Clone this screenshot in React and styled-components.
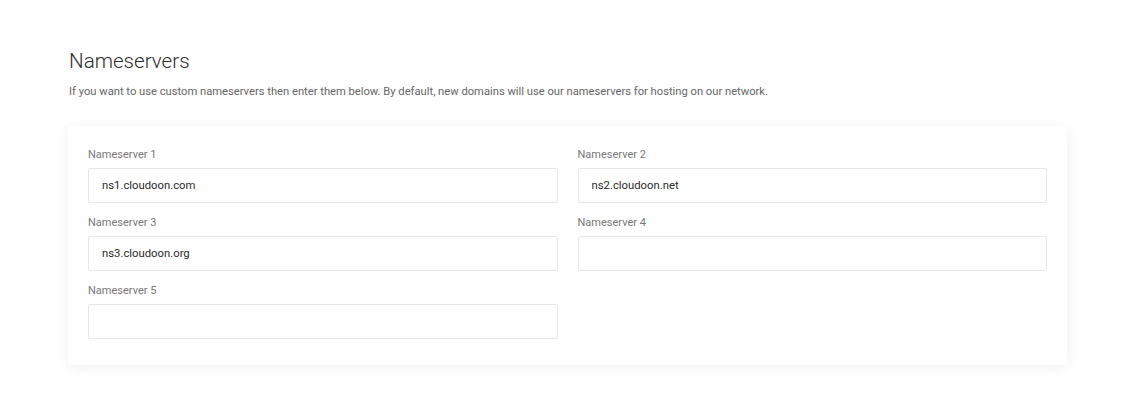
import React from "react";
import styled, { createGlobalStyle } from "styled-components";

const Global = createGlobalStyle`
  html, body { margin: 0; padding: 0; background: #ffffff; }
  body { font-family: Roboto, "Liberation Sans", Arial, sans-serif; }
  * { box-sizing: border-box; }
`;

const Page = styled.div`
  padding: 49px 0 40px 69px;
`;

const Section = styled.section`
  width: 998px;
`;

const Title = styled.h2`
  margin: 0;
  font-size: 20.6px;
  line-height: 24px;
  font-weight: 300;
  color: #2e2e2e;
`;

const Description = styled.p`
  margin: 10px 0 25px;
  font-size: 11.2px;
  line-height: 18px;
  color: #666;
`;

const Card = styled.div`
  margin-left: -1px;
  background: #fff;
  border-radius: 3px;
  box-shadow: 0 2px 14px rgba(0, 0, 0, 0.07);
  padding: 21px 20px 26px;
  display: grid;
  grid-template-columns: 1fr 1fr;
  column-gap: 20px;
  row-gap: 12px;
`;

const Field = styled.label`
  display: flex;
  flex-direction: column;
  gap: 5px;
`;

const Label = styled.span`
  font-size: 11px;
  line-height: 16px;
  color: #777;
`;

const Input = styled.input`
  height: 35px;
  border: 1px solid #e8e8e8;
  border-radius: 2px;
  padding: 0 13px;
  font-family: inherit;
  font-size: 11.3px;
  color: #2a2a2a;
  background: #fff;
  outline: none;
`;

const fields = [
  { label: "Nameserver 1", value: "ns1.cloudoon.com" },
  { label: "Nameserver 2", value: "ns2.cloudoon.net" },
  { label: "Nameserver 3", value: "ns3.cloudoon.org" },
  { label: "Nameserver 4", value: "" },
  { label: "Nameserver 5", value: "" },
];

export default function App() {
  return (
    <>
      <Global />
      <Page>
        <Section>
          <Title>Nameservers</Title>
          <Description>
            If you want to use custom nameservers then enter them below. By default, new domains will use our nameservers for hosting on our network.
          </Description>
          <Card>
            {fields.map((f) => (
              <Field key={f.label}>
                <Label>{f.label}</Label>
                <Input defaultValue={f.value} />
              </Field>
            ))}
          </Card>
        </Section>
      </Page>
    </>
  );
}
